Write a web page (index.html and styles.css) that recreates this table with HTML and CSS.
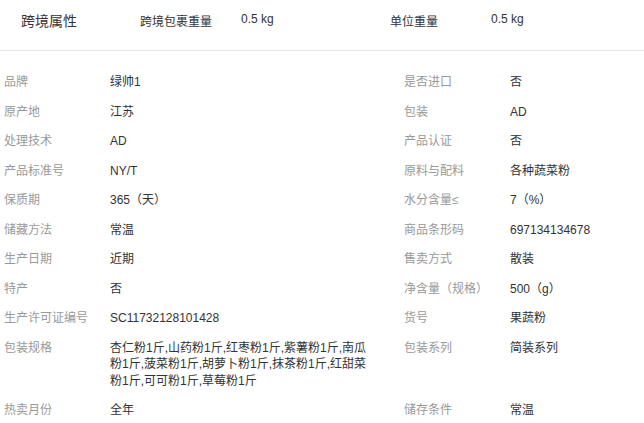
FILE: index.html
```html
<!DOCTYPE html>
<html lang="zh-CN">
<head>
  <meta charset="UTF-8">
  <meta name="viewport" content="width=device-width, initial-scale=1.0">
  <title>商品属性</title>
  <link rel="stylesheet" href="styles.css">
</head>
<body>
  <div class="cross-border">
    <h3 class="cb-title">跨境属性</h3>
    <div class="cb-item">
      <span class="cb-label">跨境包裹重量</span>
      <span class="cb-value">0.5 kg</span>
    </div>
    <div class="cb-item">
      <span class="cb-label">单位重量</span>
      <span class="cb-value">0.5 kg</span>
    </div>
  </div>

  <ul class="attr-list">
    <li class="attr-item"><span class="attr-label">品牌</span><span class="attr-value">绿帅1</span></li>
    <li class="attr-item"><span class="attr-label">是否进口</span><span class="attr-value">否</span></li>
    <li class="attr-item"><span class="attr-label">原产地</span><span class="attr-value">江苏</span></li>
    <li class="attr-item"><span class="attr-label">包装</span><span class="attr-value">AD</span></li>
    <li class="attr-item"><span class="attr-label">处理技术</span><span class="attr-value">AD</span></li>
    <li class="attr-item"><span class="attr-label">产品认证</span><span class="attr-value">否</span></li>
    <li class="attr-item"><span class="attr-label">产品标准号</span><span class="attr-value">NY/T</span></li>
    <li class="attr-item"><span class="attr-label">原料与配料</span><span class="attr-value">各种蔬菜粉</span></li>
    <li class="attr-item"><span class="attr-label">保质期</span><span class="attr-value">365（天）</span></li>
    <li class="attr-item"><span class="attr-label">水分含量≤</span><span class="attr-value">7（%）</span></li>
    <li class="attr-item"><span class="attr-label">储藏方法</span><span class="attr-value">常温</span></li>
    <li class="attr-item"><span class="attr-label">商品条形码</span><span class="attr-value">697134134678</span></li>
    <li class="attr-item"><span class="attr-label">生产日期</span><span class="attr-value">近期</span></li>
    <li class="attr-item"><span class="attr-label">售卖方式</span><span class="attr-value">散装</span></li>
    <li class="attr-item"><span class="attr-label">特产</span><span class="attr-value">否</span></li>
    <li class="attr-item"><span class="attr-label">净含量（规格）</span><span class="attr-value">500（g）</span></li>
    <li class="attr-item"><span class="attr-label">生产许可证编号</span><span class="attr-value">SC11732128101428</span></li>
    <li class="attr-item"><span class="attr-label">货号</span><span class="attr-value">果蔬粉</span></li>
    <li class="attr-item"><span class="attr-label">包装规格</span><span class="attr-value">杏仁粉1斤,山药粉1斤,红枣粉1斤,紫薯粉1斤,南瓜粉1斤,菠菜粉1斤,胡萝卜粉1斤,抹茶粉1斤,红甜菜粉1斤,可可粉1斤,草莓粉1斤</span></li>
    <li class="attr-item"><span class="attr-label">包装系列</span><span class="attr-value">简装系列</span></li>
    <li class="attr-item"><span class="attr-label">热卖月份</span><span class="attr-value">全年</span></li>
    <li class="attr-item"><span class="attr-label">储存条件</span><span class="attr-value">常温</span></li>
  </ul>
</body>
</html>
```

FILE: styles.css
```css
body {
  font-family: "Liberation Sans", Arial, "Noto Sans CJK SC", sans-serif;
  font-size: 12px;
  margin: 0;
  padding: 0;
  background-color: #fff;
  color: #333;
}

.cross-border {
  display: flex;
  align-items: center;
  height: 50px;
  padding-left: 21px;
  border-bottom: 1px solid #e8e8e8;
}

.cb-title {
  width: 119px;
  margin: -10px 0 0;
  font-size: 14px;
  font-weight: normal;
  color: #333;
}

.cb-item {
  display: flex;
  width: 250px;
  margin-top: -10px;
}

.cb-label {
  width: 101px;
  color: #333;
}

.cb-value {
  color: #333;
}

.attr-list {
  list-style: none;
  margin: 0;
  padding: 17px 0 0;
  display: grid;
  grid-template-columns: 400px 1fr;
}

.attr-item {
  display: flex;
  padding: 6px 28px 7px 4px;
  line-height: 16.5px;
}

.attr-label {
  flex: 0 0 106px;
  color: #999;
}

.attr-value {
  flex: 1;
  color: #333;
}
```
